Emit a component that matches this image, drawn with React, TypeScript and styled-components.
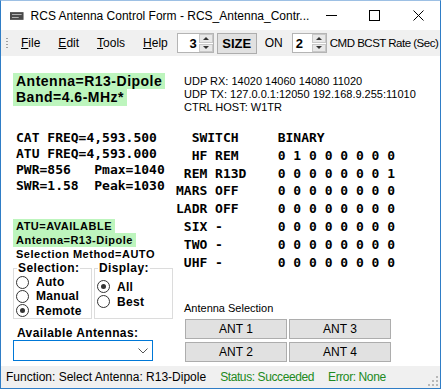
import React from 'react';
import styled, { createGlobalStyle } from 'styled-components';

const GlobalStyle = createGlobalStyle`
  html, body { margin: 0; padding: 0; background: #fff; }
  body { font-family: "Liberation Sans", Arial, sans-serif; color: #000; }
`;

const UI = `"Liberation Sans", Arial, sans-serif`;
const MONO = `"DejaVu Sans Mono", "Liberation Mono", monospace`;

const Window = styled.div`
  width: 441px;
  height: 389px;
  box-sizing: border-box;
  border: 1px solid #2f7dc6;
  border-top-color: #9dc0e4;
  display: flex;
  flex-direction: column;
  background: #fff;
  overflow: hidden;
`;

const TitleBar = styled.div`
  height: 29px;
  flex-shrink: 0;
  display: flex;
  align-items: center;
  font: 12px ${UI};
`;

const AppIcon = styled.svg`
  margin: 0 7px 0 9px;
`;

const TitleText = styled.div`
  flex: 1;
  white-space: nowrap;
`;

const Caption = styled.div`
  width: 45px;
  height: 29px;
  display: flex;
  align-items: center;
  justify-content: center;
`;

const MenuBar = styled.div`
  height: 26px;
  flex-shrink: 0;
  background: #f0f0f0;
  display: flex;
  align-items: center;
  font: 12px ${UI};
`;

const Grip = styled.div`
  width: 2px;
  height: 12px;
  margin: 0 10px 0 5px;
  background: radial-gradient(circle, #a0a0a0 0.8px, transparent 1px) 0 0 / 2px 3px;
`;

const MenuItem = styled.span<{ $first?: boolean }>`
  padding: 0 9px 0 ${(p) => (p.$first ? '3px' : '9px')};
  u { text-decoration: underline; text-underline-offset: 1px; }
`;

const UpDown = styled.div<{ $w: number; $right?: boolean }>`
  width: ${(p) => p.$w}px;
  height: 20px;
  box-sizing: border-box;
  background: #fff;
  border: 1px solid #b4b4b4;
  display: flex;
  align-items: center;
  justify-content: ${(p) => (p.$right ? 'flex-end' : 'space-between')};
  font: bold 13px ${UI};
  padding-left: 3px;
`;

const UpDownValue = styled.span`
  padding-right: 1px;
`;

const Spin = styled.div`
  width: 14px;
  height: 18px;
  display: flex;
  flex-direction: column;
  gap: 1px;
  margin-left: 1px;
`;

const SpinBtn = styled.div<{ $up?: boolean }>`
  flex: 1;
  background: #e8e8e8;
  border: 1px solid #c8c8c8;
  display: flex;
  align-items: center;
  justify-content: center;
  &::after {
    content: '';
    border-left: 3px solid transparent;
    border-right: 3px solid transparent;
    ${(p) => (p.$up ? 'border-bottom: 3px solid #333;' : 'border-top: 3px solid #333;')}
  }
`;

const SizeButton = styled.div`
  width: 40px;
  height: 21px;
  margin-left: 3px;
  box-sizing: border-box;
  background: #e1e1e1;
  border: 1px solid #adadad;
  display: flex;
  align-items: center;
  justify-content: center;
  font: bold 13px ${UI};
`;

const MenuLabel = styled.span<{ $ml: number; $mr?: number; $tight?: boolean }>`
  margin-left: ${(p) => p.$ml}px;
  margin-right: ${(p) => p.$mr ?? 0}px;
  font-size: ${(p) => (p.$tight ? '11.5px' : '12px')};
  letter-spacing: ${(p) => (p.$tight ? '-0.5px' : '0')};
  white-space: nowrap;
`;

const Client = styled.div`
  flex: 1;
  display: flex;
`;

const LeftCol = styled.div`
  width: 163px;
  padding-left: 12px;
  display: flex;
  flex-direction: column;
  align-items: flex-start;
`;

const RightCol = styled.div`
  flex: 1;
  display: flex;
  flex-direction: column;
`;

const Highlight = styled.div<{ $green?: boolean; $size: number; $lh: number }>`
  font: bold ${(p) => p.$size}px/${(p) => p.$lh}px ${UI};
  letter-spacing: 0.5px;
  padding: 0 3px;
  width: fit-content;
  background: ${(p) => (p.$green ? '#bdf5bd' : 'transparent')};
  white-space: nowrap;
`;

const BigInfo = styled.div`
  margin-top: 17px;
`;

const FreqBlock = styled.pre`
  margin: 24px 0 0 3px;
  font: bold 13px/16px ${MONO};
`;

const AtuBlock = styled.div`
  margin-top: 25px;
`;

const GroupRow = styled.div`
  display: flex;
  gap: 2px;
`;

const Group = styled.fieldset<{ $w: number; $h: number }>`
  width: ${(p) => p.$w}px;
  height: ${(p) => p.$h}px;
  box-sizing: border-box;
  margin: 0;
  border: 1px solid #dcdcdc;
  padding: 0 0 0 2px;
  display: flex;
  flex-direction: column;
  legend {
    font: bold 12px ${UI};
    letter-spacing: 0.4px;
    padding: 0 1px;
    margin-left: 1px;
  }
`;

const RadioRow = styled.label`
  display: flex;
  align-items: center;
  height: 15px;
  font: bold 12px ${UI};
  letter-spacing: 0.3px;
`;

const RadioDot = styled.span<{ $on?: boolean }>`
  width: 11px;
  height: 11px;
  border: 1px solid #333;
  border-radius: 50%;
  margin-right: 7px;
  display: flex;
  align-items: center;
  justify-content: center;
  background: #fff;
  &::after {
    content: '';
    width: 5px;
    height: 5px;
    border-radius: 50%;
    background: ${(p) => (p.$on ? '#333' : 'transparent')};
  }
`;

const ComboLabel = styled.div`
  margin: 7px 0 0 4px;
  font: bold 12px/14px ${UI};
  letter-spacing: 0.4px;
`;

const Combo = styled.div`
  width: 140px;
  height: 21px;
  box-sizing: border-box;
  border: 1px solid #0078d7;
  display: flex;
  align-items: center;
  justify-content: flex-end;
  padding-right: 4px;
`;

const UdpBlock = styled.div`
  margin: 19px 0 0 8px;
  font: 11px/13px ${UI};
`;

const SwitchTable = styled.div`
  margin-top: 15px;
  display: grid;
  grid-template-columns: 4ch 7ch auto;
  column-gap: 1ch;
  font: bold 13px/17.8px ${MONO};
  white-space: pre;
`;

const Name = styled.span`
  text-align: right;
`;

const HeadCell = styled.span<{ $span?: boolean }>`
  grid-column: ${(p) => (p.$span ? '1 / span 2' : 'auto')};
  padding-left: ${(p) => (p.$span ? '2ch' : '0')};
`;

const AntSection = styled.div`
  margin: 30px 0 0 8px;
`;

const AntLabel = styled.div`
  font: 11px/14px ${UI};
  margin-bottom: 4px;
`;

const AntGrid = styled.div`
  display: grid;
  grid-template-columns: 102px 102px;
  grid-auto-rows: 20px;
  gap: 3px 2px;
  margin-left: 1px;
`;

const AntButton = styled.div`
  background: #e1e1e1;
  border: 1px solid #adadad;
  display: flex;
  align-items: center;
  justify-content: center;
  font: 12px ${UI};
`;

const StatusBar = styled.div`
  height: 22px;
  flex-shrink: 0;
  background: #f0f0f0;
  display: flex;
  align-items: center;
  padding-left: 5px;
  font: 12px ${UI};
`;

const StatusText = styled.span<{ $green?: boolean; $ml: number }>`
  margin-left: ${(p) => p.$ml}px;
  color: ${(p) => (p.$green ? '#218a21' : '#000')};
  letter-spacing: ${(p) => (p.$green ? '-0.4px' : '0')};
  white-space: nowrap;
`;

const SizeGrip = styled.svg`
  margin-left: auto;
  margin-right: 2px;
  align-self: flex-end;
  margin-bottom: 2px;
`;

const switches: [string, string, string][] = [
  ['HF', 'REM', '0 1 0 0 0 0 0 0'],
  ['REM', 'R13D', '0 0 0 0 0 0 0 1'],
  ['MARS', 'OFF', '0 0 0 0 0 0 0 0'],
  ['LADR', 'OFF', '0 0 0 0 0 0 0 0'],
  ['SIX', '-', '0 0 0 0 0 0 0 0'],
  ['TWO', '-', '0 0 0 0 0 0 0 0'],
  ['UHF', '-', '0 0 0 0 0 0 0 0'],
];

const Radio = ({ label, on }: { label: string; on?: boolean }) => (
  <RadioRow>
    <RadioDot $on={on} />
    {label}
  </RadioRow>
);

export default function App() {
  return (
    <>
      <GlobalStyle />
      <Window>
        <TitleBar>
          <AppIcon width="14" height="8" viewBox="0 0 14 8">
            <rect x="0" y="0" width="14" height="8" fill="#4a4a4a" />
            <rect x="2" y="2" width="10" height="1" fill="#bbb" />
            <rect x="2" y="5" width="7" height="1" fill="#bbb" />
          </AppIcon>
          <TitleText>RCS Antenna Control Form - RCS_Antenna_Contr...</TitleText>
          <Caption>
            <svg width="11" height="11" viewBox="0 0 11 11">
              <line x1="0" y1="5.5" x2="11" y2="5.5" stroke="#000" strokeWidth="1" />
            </svg>
          </Caption>
          <Caption>
            <svg width="11" height="11" viewBox="0 0 11 11">
              <rect x="0.5" y="0.5" width="10" height="10" fill="none" stroke="#000" strokeWidth="1" />
            </svg>
          </Caption>
          <Caption>
            <svg width="11" height="11" viewBox="0 0 11 11">
              <path d="M0.5 0.5 L10.5 10.5 M10.5 0.5 L0.5 10.5" stroke="#000" strokeWidth="1" />
            </svg>
          </Caption>
        </TitleBar>

        <MenuBar>
          <Grip />
          <MenuItem $first><u>F</u>ile</MenuItem>
          <MenuItem><u>E</u>dit</MenuItem>
          <MenuItem><u>T</u>ools</MenuItem>
          <MenuItem><u>H</u>elp</MenuItem>
          <UpDown $w={37} $right>
            <UpDownValue>3</UpDownValue>
            <Spin>
              <SpinBtn $up />
              <SpinBtn />
            </Spin>
          </UpDown>
          <SizeButton>SIZE</SizeButton>
          <MenuLabel $ml={8} $mr={9}>ON</MenuLabel>
          <UpDown $w={35}>
            <UpDownValue>2</UpDownValue>
            <Spin>
              <SpinBtn $up />
              <SpinBtn />
            </Spin>
          </UpDown>
          <MenuLabel $ml={3} $tight>CMD BCST Rate (Sec)</MenuLabel>
        </MenuBar>

        <Client>
          <LeftCol>
            <BigInfo>
              <Highlight $green $size={14} $lh={16}>Antenna=R13-Dipole</Highlight>
              <Highlight $green $size={14} $lh={17}>Band=4.6-MHz*</Highlight>
            </BigInfo>

            <FreqBlock>{`CAT FREQ=4,593.500
ATU FREQ=4,593.000
PWR=856   Pmax=1040
SWR=1.58  Peak=1030`}</FreqBlock>

            <AtuBlock>
              <Highlight $green $size={11} $lh={14}>ATU=AVAILABLE</Highlight>
              <Highlight $green $size={11} $lh={14}>Antenna=R13-Dipole</Highlight>
              <Highlight $size={11} $lh={14}>Selection Method=AUTO</Highlight>
            </AtuBlock>

            <GroupRow>
              <Group $w={79} $h={58}>
                <legend>Selection:</legend>
                <Radio label="Auto" />
                <Radio label="Manual" />
                <Radio label="Remote" on />
              </Group>
              <Group $w={79} $h={58}>
                <legend>Display:</legend>
                <div style={{ height: 4 }} />
                <Radio label="All" on />
                <Radio label="Best" />
              </Group>
            </GroupRow>

            <ComboLabel>Available Antennas:</ComboLabel>
            <Combo>
              <svg width="10" height="6" viewBox="0 0 10 6">
                <polyline points="0.5,0.5 5,5 9.5,0.5" fill="none" stroke="#555" strokeWidth="1" />
              </svg>
            </Combo>
          </LeftCol>

          <RightCol>
            <UdpBlock>
              <div>UDP RX: 14020 14060 14080 11020</div>
              <div>UDP TX: 127.0.0.1:12050 192.168.9.255:11010</div>
              <div>CTRL HOST: W1TR</div>
            </UdpBlock>

            <SwitchTable>
              <HeadCell $span>SWITCH</HeadCell>
              <HeadCell>BINARY</HeadCell>
              {switches.map(([n, v, b]) => (
                <React.Fragment key={n}>
                  <Name>{n}</Name>
                  <span>{v}</span>
                  <span>{b}</span>
                </React.Fragment>
              ))}
            </SwitchTable>

            <AntSection>
              <AntLabel>Antenna Selection</AntLabel>
              <AntGrid>
                <AntButton>ANT 1</AntButton>
                <AntButton>ANT 3</AntButton>
                <AntButton>ANT 2</AntButton>
                <AntButton>ANT 4</AntButton>
              </AntGrid>
            </AntSection>
          </RightCol>
        </Client>

        <StatusBar>
          <StatusText $ml={0}>Function: Select Antenna: R13-Dipole</StatusText>
          <StatusText $green $ml={14}>Status: Succeeded</StatusText>
          <StatusText $green $ml={14}>Error: None</StatusText>
          <SizeGrip width="10" height="10" viewBox="0 0 10 10">
            <rect x="8" y="0" width="2" height="2" fill="#b8b8b8" />
            <rect x="4" y="4" width="2" height="2" fill="#b8b8b8" />
            <rect x="8" y="4" width="2" height="2" fill="#b8b8b8" />
            <rect x="0" y="8" width="2" height="2" fill="#b8b8b8" />
            <rect x="4" y="8" width="2" height="2" fill="#b8b8b8" />
            <rect x="8" y="8" width="2" height="2" fill="#b8b8b8" />
          </SizeGrip>
        </StatusBar>
      </Window>
    </>
  );
}
